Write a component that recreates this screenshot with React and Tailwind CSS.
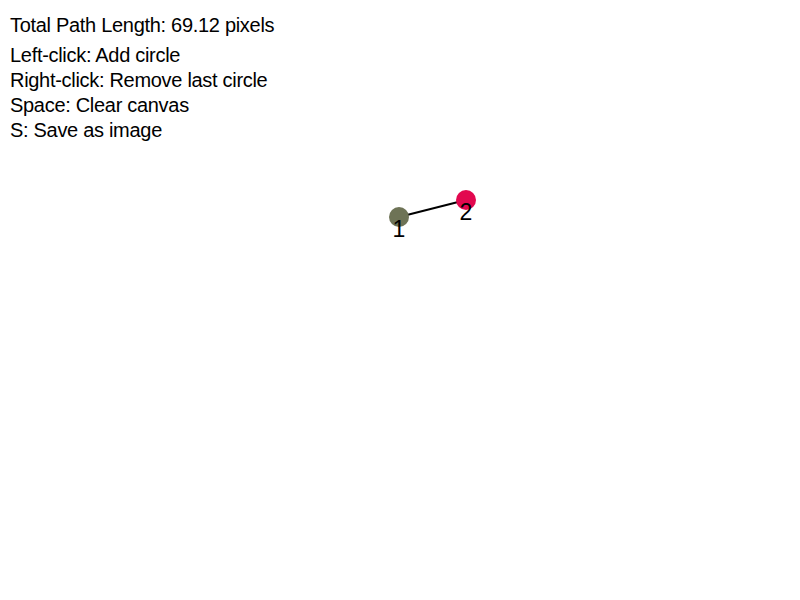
import React from 'react';

const points = [
    { x: 399, y: 217, color: "#6e7356", label: "1" },
    { x: 466, y: 200, color: "#e2084f", label: "2" },
];

const App = () => {
    return (
        <div className="relative w-[800px] h-[600px] bg-white overflow-hidden" style={{ fontFamily: '"Liberation Sans", Arial, sans-serif' }}>

            {/* Canvas */}
            <svg className="absolute inset-0" width="800" height="600">
                <line x1={points[0].x} y1={points[0].y} x2={points[1].x} y2={points[1].y} stroke="#000" strokeWidth="2" />
                {points.map((p) => (
                    <g key={p.label}>
                        <circle cx={p.x} cy={p.y} r="10" fill={p.color} />
                        <text x={p.x} y={p.y + 20} textAnchor="middle" fontSize="23" fill="#000">{p.label}</text>
                    </g>
                ))}
            </svg>

            {/* Info text */}
            <div className="relative pl-[10px] pt-[13px] text-[20px] leading-[25px] tracking-[-0.3px] text-black">
                <p>Total Path Length: 69.12 pixels</p>
                <div className="mt-[5px]">
                    <p>Left-click: Add circle</p>
                    <p>Right-click: Remove last circle</p>
                    <p>Space: Clear canvas</p>
                    <p>S: Save as image</p>
                </div>
            </div>
        </div>
    )
}

export default App
